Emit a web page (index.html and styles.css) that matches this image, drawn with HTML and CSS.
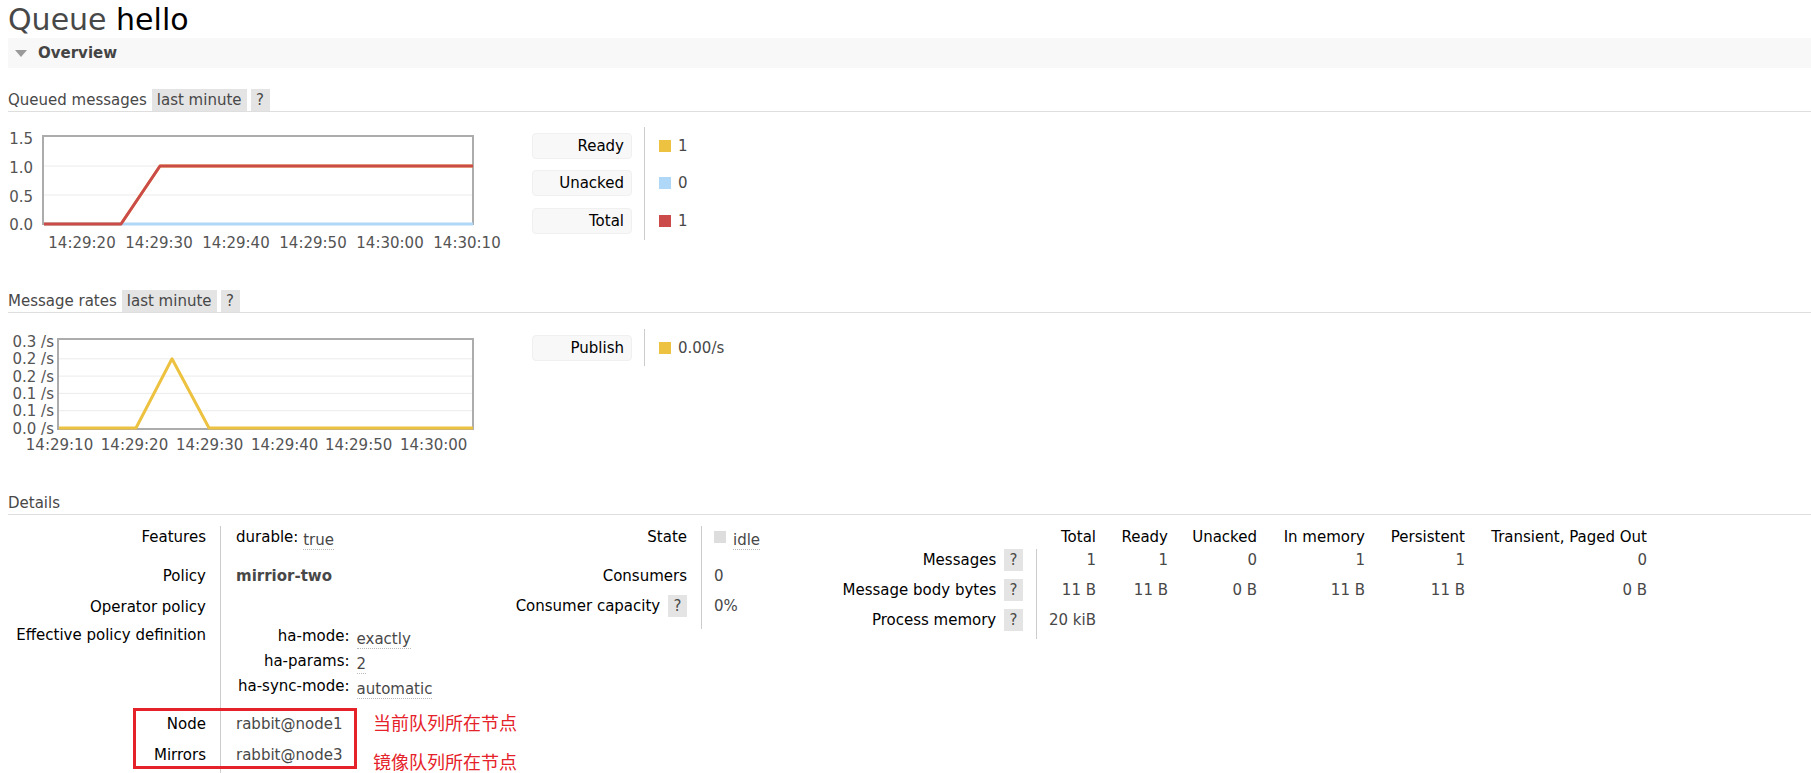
FILE: index.html
```html
<!DOCTYPE html>
<html lang="en">
<head>
<meta charset="utf-8">
<title>Queue hello</title>
<link rel="stylesheet" href="styles.css">
</head>
<body>
<div class="page">
  <h1 class="title">Queue <b>hello</b></h1>

  <div class="section">
    <h2 class="section-head">
      <svg class="caret" width="12" height="7" viewBox="0 0 12 7"><polygon points="0,0 12,0 6,7"/></svg>
      Overview
    </h2>
  </div>

  <h3 class="sub"><span class="sub-title">Queued messages</span><span class="pill">last minute</span><span class="pill help">?</span></h3>

  <div class="chart-row">
    <svg class="chart" width="500" height="130" viewBox="0 0 500 130">
      <g class="grid">
        <line x1="36" y1="39" x2="464" y2="39"/>
        <line x1="36" y1="68" x2="464" y2="68"/>
      </g>
      <rect class="frame" x="35" y="9" width="430" height="88"/>
      <polyline class="s-yellow" points="36,97 113,97 152,39 465,39"/>
      <polyline class="s-blue" points="36,97 465,97"/>
      <polyline class="s-red" points="36,97 113,97 152,39 465,39"/>
      <g class="ylab">
        <text x="25" y="16.5">1.5</text>
        <text x="25" y="45.5">1.0</text>
        <text x="25" y="74.5">0.5</text>
        <text x="25" y="102.5">0.0</text>
      </g>
      <g class="xlab">
        <text x="74" y="121">14:29:20</text>
        <text x="151" y="121">14:29:30</text>
        <text x="228" y="121">14:29:40</text>
        <text x="305" y="121">14:29:50</text>
        <text x="382" y="121">14:30:00</text>
        <text x="459" y="121">14:30:10</text>
      </g>
    </svg>
    <table class="legend">
      <tr><th><span class="key">Ready</span></th><td><span class="swatch sw-yellow"></span>1</td></tr>
      <tr><th><span class="key">Unacked</span></th><td><span class="swatch sw-blue"></span>0</td></tr>
      <tr><th><span class="key">Total</span></th><td><span class="swatch sw-red"></span>1</td></tr>
    </table>
  </div>

  <h3 class="sub sub-rates"><span class="sub-title">Message rates</span><span class="pill">last minute</span><span class="pill help">?</span></h3>

  <div class="chart-row">
    <svg class="chart" width="500" height="130" viewBox="0 0 500 130">
      <g class="grid">
        <line x1="51" y1="81.7" x2="464" y2="81.7"/>
        <line x1="51" y1="64.4" x2="464" y2="64.4"/>
        <line x1="51" y1="47.1" x2="464" y2="47.1"/>
        <line x1="51" y1="29.8" x2="464" y2="29.8"/>
      </g>
      <rect class="frame" x="50" y="10" width="415" height="90"/>
      <polyline class="s-yellow" points="51,99 128,99 164,29.8 201,99 465,99"/>
      <g class="ylab">
        <text x="46" y="18">0.3 /s</text>
        <text x="46" y="35.3">0.2 /s</text>
        <text x="46" y="52.6">0.2 /s</text>
        <text x="46" y="69.9">0.1 /s</text>
        <text x="46" y="87.2">0.1 /s</text>
        <text x="46" y="104.5">0.0 /s</text>
      </g>
      <g class="xlab">
        <text x="51.5" y="120.5">14:29:10</text>
        <text x="126.5" y="120.5">14:29:20</text>
        <text x="201.6" y="120.5">14:29:30</text>
        <text x="276.7" y="120.5">14:29:40</text>
        <text x="350.6" y="120.5">14:29:50</text>
        <text x="425.7" y="120.5">14:30:00</text>
      </g>
    </svg>
    <table class="legend legend-single">
      <tr><th><span class="key">Publish</span></th><td><span class="swatch sw-yellow"></span>0.00/s</td></tr>
    </table>
  </div>

  <h3 class="sub sub-details"><span class="sub-title">Details</span></h3>

  <div class="details">
    <table class="facts t1">
      <tr class="r-features"><th>Features</th><td><span class="k">durable:</span> <span class="acr">true</span></td></tr>
      <tr class="r-policy"><th>Policy</th><td class="policy-name">mirrior-two</td></tr>
      <tr class="r-operator"><th>Operator policy</th><td></td></tr>
      <tr class="r-effective"><th>Effective policy definition</th>
        <td>
          <table class="mini">
            <tr><th>ha-mode:</th><td><span class="acr">exactly</span></td></tr>
            <tr><th>ha-params:</th><td><span class="acr">2</span></td></tr>
            <tr><th>ha-sync-mode:</th><td><span class="acr">automatic</span></td></tr>
          </table>
        </td>
      </tr>
      <tr class="r-node"><th>Node</th><td>rabbit@node1</td></tr>
      <tr class="r-mirrors"><th>Mirrors</th><td>rabbit@node3</td></tr>
    </table>

    <table class="facts t2">
      <tr class="r-state"><th>State</th><td><span class="state-dot"></span><span class="acr">idle</span></td></tr>
      <tr class="r-consumers"><th>Consumers</th><td>0</td></tr>
      <tr class="r-capacity"><th>Consumer capacity <span class="pill help">?</span></th><td>0%</td></tr>
    </table>

    <table class="facts t3">
      <tr class="r-head">
        <th class="blank"></th>
        <th class="num c1">Total</th>
        <th class="num c2">Ready</th>
        <th class="num c3">Unacked</th>
        <th class="num c4">In memory</th>
        <th class="num c5">Persistent</th>
        <th class="num c6">Transient, Paged Out</th>
      </tr>
      <tr>
        <th>Messages <span class="pill help">?</span></th>
        <td class="num">1</td><td class="num">1</td><td class="num">0</td><td class="num">1</td><td class="num">1</td><td class="num">0</td>
      </tr>
      <tr>
        <th>Message body bytes <span class="pill help">?</span></th>
        <td class="num">11 B</td><td class="num">11 B</td><td class="num">0 B</td><td class="num">11 B</td><td class="num">11 B</td><td class="num">0 B</td>
      </tr>
      <tr>
        <th>Process memory <span class="pill help">?</span></th>
        <td class="num">20 kiB</td><td></td><td></td><td></td><td></td><td></td>
      </tr>
    </table>

    <div class="mark-box"></div>
    <div class="note note-node">当前队列所在节点</div>
    <div class="note note-mirrors">镜像队列所在节点</div>
  </div>
</div>
</body>
</html>
```

FILE: styles.css
```css
html, body {
  margin: 0;
  padding: 0;
  background: #fff;
}

body {
  font-family: "DejaVu Sans", "Noto Sans CJK SC", sans-serif;
  font-size: 15px;
  color: #484848;
  overflow: hidden;
}

.page {
  padding-left: 8px;
}

.title {
  margin: 2px 0 0;
  font-size: 30px;
  line-height: 36px;
  font-weight: normal;
  color: #484848;
}

.title b {
  font-weight: normal;
  color: #000;
}

.section {
  background: #f8f8f8;
  height: 30px;
}

.section-head {
  margin: 0;
  height: 30px;
  display: flex;
  align-items: center;
  font-size: 15px;
  font-weight: bold;
  color: #444;
}

.caret {
  margin: 0 11px 0 7px;
  fill: #9a9a9a;
}

.sub {
  display: flex;
  align-items: center;
  gap: 4px;
  height: 22px;
  margin: 21px 0 0;
  font-size: 15px;
  font-weight: normal;
  color: #484848;
  border-bottom: 1px solid #dedede;
}

.sub-title {
  margin-right: 1px;
}

.sub-rates,
.sub-details {
  margin-top: 33px;
}

.pill {
  display: inline-block;
  background: #e4e4e4;
  height: 22px;
  line-height: 22px;
  padding: 0 5px;
  color: #484848;
}

.help {
  width: 19px;
  padding: 0;
  text-align: center;
  box-sizing: border-box;
}

.chart-row {
  display: flex;
  align-items: flex-start;
  margin-top: 15px;
}

.chart-row + .sub {
  margin-top: 33px;
}

.sub-rates + .chart-row {
  margin-top: 16px;
}

.chart {
  display: block;
  flex: none;
}

.chart .grid line {
  stroke: #ebebeb;
  stroke-width: 1;
}

.chart .frame {
  fill: none;
  stroke: #acacac;
  stroke-width: 2;
}

.chart polyline {
  fill: none;
  stroke-width: 3;
  stroke-linejoin: round;
}

.s-yellow { stroke: #edc240; }
.s-blue { stroke: #afd8f8; }
.s-red { stroke: #cb4b4b; }

.chart text {
  font-family: "DejaVu Sans", sans-serif;
  font-size: 15px;
  fill: #545454;
}

.chart .ylab text { text-anchor: end; }
.chart .xlab text { text-anchor: middle; }

.legend {
  border-collapse: separate;
  border-spacing: 0;
  margin-left: 24px;
}

.legend th {
  padding: 0 12px 0 0;
  height: 37.5px;
  font-weight: normal;
  vertical-align: middle;
}

.legend-single th {
  height: 37px;
}

.legend .key {
  display: block;
  box-sizing: border-box;
  width: 100px;
  height: 26px;
  line-height: 24px;
  padding-right: 7px;
  text-align: right;
  background: #f8f8f8;
  border: 1px solid #f0f0f0;
  border-radius: 4px;
  color: #000;
}

.legend td {
  border-left: 1px solid #cccccc;
  padding-left: 14px;
  vertical-align: middle;
  color: #484848;
}

.swatch {
  display: inline-block;
  width: 12px;
  height: 12px;
  margin-right: 7px;
  vertical-align: -1px;
}

.sw-yellow { background: #edc240; }
.sw-blue { background: #afd8f8; }
.sw-red { background: #cb4b4b; }

/* details */
.details {
  position: relative;
  display: flex;
  align-items: flex-start;
  margin-top: 11px;
}

.facts {
  border-collapse: separate;
  border-spacing: 0;
  flex: none;
}

.facts > tbody > tr > th,
.facts > tr > th {
  font-weight: normal;
  color: #000;
  text-align: right;
  vertical-align: top;
  white-space: nowrap;
  line-height: 22px;
  border-right: 1px solid #cccccc;
  padding: 0 14px 8px 0;
}

.facts > tbody > tr > td,
.facts > tr > td {
  vertical-align: top;
  white-space: nowrap;
  line-height: 22px;
  color: #484848;
  padding: 0 0 8px 15px;
}

.t1 { width: 450px; }
.t1 > tbody > tr > th { width: 198px; }

.t2 { width: 343px; }
.t2 > tbody > tr > th { width: 229px; }
.t2 > tbody > tr > td { padding-left: 12px; }

.t3 > tbody > tr > th { width: 222px; padding-right: 13px; }

.t1 .r-features > * { padding-bottom: 15px; }
.t1 .r-policy > * { padding-bottom: 9px; }
.t1 .r-operator > * { padding-bottom: 6px; }
.t1 .r-effective > * { padding-bottom: 14px; }
.t1 .r-node > * { padding-bottom: 9px; }

.t2 .r-state > * { padding-bottom: 15px; }
.t2 .r-capacity > * { padding-bottom: 12px; }

.t3 .r-head > * { padding-bottom: 1px; }
.t3 .r-head > th.blank { border-right: 0; }

.t3 .num {
  text-align: right;
  padding-left: 0;
  padding-right: 0;
  border-right: 0;
}

.t3 .r-head > th.num {
  border-right: 0;
  padding-right: 0;
}

.t3 .c1 { width: 59px; }
.t3 .c2 { width: 72px; }
.t3 .c3 { width: 89px; }
.t3 .c4 { width: 108px; }
.t3 .c5 { width: 100px; }
.t3 .c6 { width: 182px; }

.facts th .help {
  margin-left: 3px;
}

.k {
  color: #000;
}

.acr {
  display: inline-block;
  line-height: 18px;
  vertical-align: -3px;
  border-bottom: 1px dotted #bbbbbb;
  color: #484848;
}

.policy-name {
  font-weight: bold;
}

.facts td.policy-name {
  color: #484848;
}

.mini {
  border-collapse: collapse;
  margin-left: 2px;
}

.mini th {
  font-weight: normal;
  color: #000;
  text-align: right;
  line-height: 25px;
  padding: 0 7px 0 0;
  white-space: nowrap;
}

.mini td {
  line-height: 25px;
  padding: 0;
  white-space: nowrap;
}

.state-dot {
  display: inline-block;
  width: 12px;
  height: 12px;
  background: #dddddd;
  margin-right: 7px;
  vertical-align: -1px;
}

.mark-box {
  position: absolute;
  left: 125px;
  top: 182px;
  width: 224px;
  height: 61px;
  box-sizing: border-box;
  border: 3px solid #e5222a;
}

.note {
  position: absolute;
  left: 365px;
  font-family: "Noto Sans CJK SC", sans-serif;
  font-size: 18px;
  line-height: 24px;
  color: #e5222a;
  white-space: nowrap;
}

.note-node { top: 184px; }
.note-mirrors { top: 223px; }
```
